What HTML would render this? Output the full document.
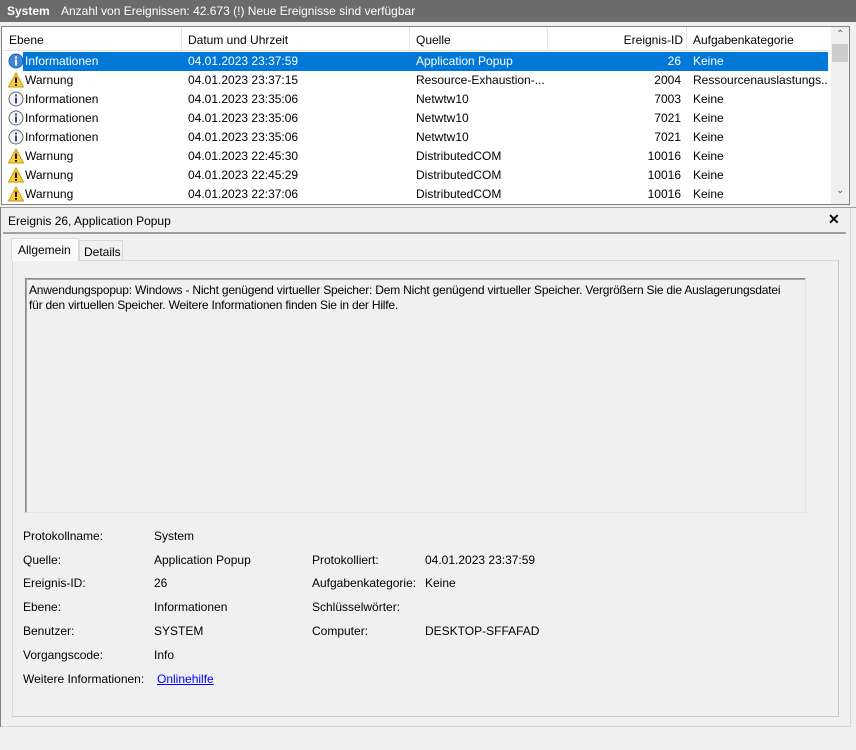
<!DOCTYPE html>
<html><head><meta charset="utf-8"><style>
*{margin:0;padding:0;box-sizing:border-box}
body{width:856px;height:750px;background:#f0f0f0;font-family:"Liberation Sans",sans-serif;font-size:12px;color:#000;position:relative;overflow:hidden}
.a{position:absolute;white-space:nowrap}
.title{left:0;top:0;width:856px;height:22px;background:#6b6b6b;color:#fff}
.list{left:1px;top:26px;width:849px;height:179px;background:#fff;border:1px solid #828282}
.hdr{left:0;top:0;width:828px;height:24px;border-bottom:1px solid #e5e5e5}
.sep{position:absolute;top:0;width:1px;height:24px;background:#e5e5e5}
.ic{position:absolute;left:5px;top:1px;width:16px;height:16px}
</style></head><body>
<div class="a title"><span class="a" style="left:7px;top:4px;font-weight:bold">System</span><span class="a" style="left:61px;top:4px">Anzahl von Ereignissen: 42.673 (!) Neue Ereignisse sind verfügbar</span></div>
<div class="a list">
 <div class="a hdr">
  <span class="a" style="left:7px;top:6px">Ebene</span>
  <div class="sep" style="left:179px"></div>
  <span class="a" style="left:186px;top:6px">Datum und Uhrzeit</span>
  <div class="sep" style="left:407px"></div>
  <span class="a" style="left:414px;top:6px">Quelle</span>
  <div class="sep" style="left:545px"></div>
  <span class="a" style="right:147px;top:6px">Ereignis-ID</span>
  <div class="sep" style="left:684px"></div>
  <span class="a" style="left:691px;top:6px">Aufgabenkategorie</span>
 </div>
 <div class="a" style="left:829px;top:0;width:18px;height:177px;background:#f0f0f0"><span class="a" style="left:5px;top:2px;font-size:10px;color:#606060">&#8963;</span><div class="a" style="left:1px;top:17px;width:16px;height:18px;background:#cdcdcd"></div><span class="a" style="left:5px;top:158px;font-size:10px;color:#606060">&#8964;</span></div>
</div>
<div id="rows"></div>
<script>
var R=[["i","Informationen","04.01.2023 23:37:59","Application Popup","26","Keine"],
["w","Warnung","04.01.2023 23:37:15","Resource-Exhaustion-...","2004","Ressourcenauslastungs..."],
["i","Informationen","04.01.2023 23:35:06","Netwtw10","7003","Keine"],
["i","Informationen","04.01.2023 23:35:06","Netwtw10","7021","Keine"],
["i","Informationen","04.01.2023 23:35:06","Netwtw10","7021","Keine"],
["w","Warnung","04.01.2023 22:45:30","DistributedCOM","10016","Keine"],
["w","Warnung","04.01.2023 22:45:29","DistributedCOM","10016","Keine"],
["w","Warnung","04.01.2023 22:37:06","DistributedCOM","10016","Keine"]];
var h="";
R.forEach(function(r,k){var t=52+k*19;
var icon=r[0]=="i"?'<svg class="ic" style="left:6px" viewBox="0 0 16 16"><circle cx="8" cy="8" r="7" fill="'+(k==0?'#3f86d8':'#f4f4f4')+'" stroke="'+(k==0?'#1e5fb0':'#6a6a6a')+'"/><rect x="7" y="6.5" width="2" height="6" fill="'+(k==0?'#fff':'#2a4f8f')+'"/><rect x="7" y="3.5" width="2" height="2" fill="'+(k==0?'#fff':'#2a4f8f')+'"/></svg>':'<svg class="ic" style="left:6px" viewBox="0 0 16 16"><path d="M8 1L15.5 15H0.5Z" fill="#f8d034" stroke="#c89a10"/><rect x="7.1" y="5.5" width="1.8" height="5.5" fill="#000"/><rect x="7.1" y="12" width="1.8" height="1.8" fill="#000"/></svg>';
var c=k==0?'color:#fff;':'';
h+='<div class="a" style="left:2px;top:'+t+'px;width:826px;height:19px;line-height:19px;overflow:hidden">'+icon+
(k==0?'<div class="a" style="left:21px;top:0;width:805px;height:19px;background:#0078d7"></div>':'')+
'<span class="a" style="left:23px;'+c+'">'+r[1]+'</span><span class="a" style="left:186px;'+c+'">'+r[2]+'</span><span class="a" style="left:414px;'+c+'">'+r[3]+'</span><span class="a" style="right:147px;'+c+'">'+r[4]+'</span><span class="a" style="left:691px;'+c+'">'+r[5]+'</span></div>';});
document.getElementById("rows").innerHTML=h;
</script>
<div class="a" style="left:0;top:207px;width:1px;height:520px;background:#828282"></div>
<div class="a" style="left:1px;top:207px;width:855px;height:1px;background:#a0a0a0"></div>
<span class="a" style="left:8px;top:214px">Ereignis 26, Application Popup</span>
<span class="a" style="left:828px;top:211px;font-weight:bold;font-size:14px">✕</span>
<div class="a" style="left:3px;top:232px;width:843px;height:2px;background:#a0a0a0"></div>
<div class="a" style="left:12px;top:260px;width:827px;height:457px;border:1px solid #dadada;background:#f0f0f0;border-right-color:#c8c8c8;border-bottom-color:#c8c8c8"></div>
<div class="a" style="left:11px;top:238px;width:68px;height:23px;background:#f9f9f9;border:1px solid #d9d9d9;border-bottom:none"></div>
<span class="a" style="left:18px;top:243px">Allgemein</span>
<div class="a" style="left:79px;top:240px;width:44px;height:20px;border:1px solid #d9d9d9;border-bottom:none;background:#f0f0f0"></div>
<span class="a" style="left:84px;top:245px">Details</span>
<div class="a" style="left:25px;top:278px;width:781px;height:235px;border:1px solid #8a8a8a;border-right-color:#e6e6e6;border-bottom-color:#e6e6e6;box-shadow:inset 1px 1px 0 #a8a8a8"></div>
<div class="a" style="left:29px;top:283px;line-height:15px;letter-spacing:-0.2px">Anwendungspopup: Windows - Nicht genügend virtueller Speicher: Dem Nicht genügend virtueller Speicher. Vergrößern Sie die Auslagerungsdatei<br>für den virtuellen Speicher. Weitere Informationen finden Sie in der Hilfe.</div>
<span class="a" style="left:23px;top:529px">Protokollname:</span><span class="a" style="left:154px;top:529px">System</span>
<span class="a" style="left:23px;top:553px">Quelle:</span><span class="a" style="left:154px;top:553px">Application Popup</span>
<span class="a" style="left:312px;top:553px">Protokolliert:</span><span class="a" style="left:425px;top:553px">04.01.2023 23:37:59</span>
<span class="a" style="left:23px;top:576px">Ereignis-ID:</span><span class="a" style="left:154px;top:576px">26</span>
<span class="a" style="left:312px;top:576px">Aufgabenkategorie:</span><span class="a" style="left:425px;top:576px">Keine</span>
<span class="a" style="left:23px;top:600px">Ebene:</span><span class="a" style="left:154px;top:600px">Informationen</span>
<span class="a" style="left:312px;top:600px">Schlüsselwörter:</span>
<span class="a" style="left:23px;top:624px">Benutzer:</span><span class="a" style="left:154px;top:624px">SYSTEM</span>
<span class="a" style="left:312px;top:624px">Computer:</span><span class="a" style="left:425px;top:624px">DESKTOP-SFFAFAD</span>
<span class="a" style="left:23px;top:648px">Vorgangscode:</span><span class="a" style="left:154px;top:648px">Info</span>
<span class="a" style="left:23px;top:672px">Weitere Informationen:</span><span class="a" style="left:157px;top:672px;color:#0000ff;text-decoration:underline">Onlinehilfe</span>
<div class="a" style="left:1px;top:726px;width:850px;height:1px;background:#d8d8d8"></div>
<div class="a" style="left:850px;top:208px;width:1px;height:519px;background:#d8d8d8"></div>
</body></html>
